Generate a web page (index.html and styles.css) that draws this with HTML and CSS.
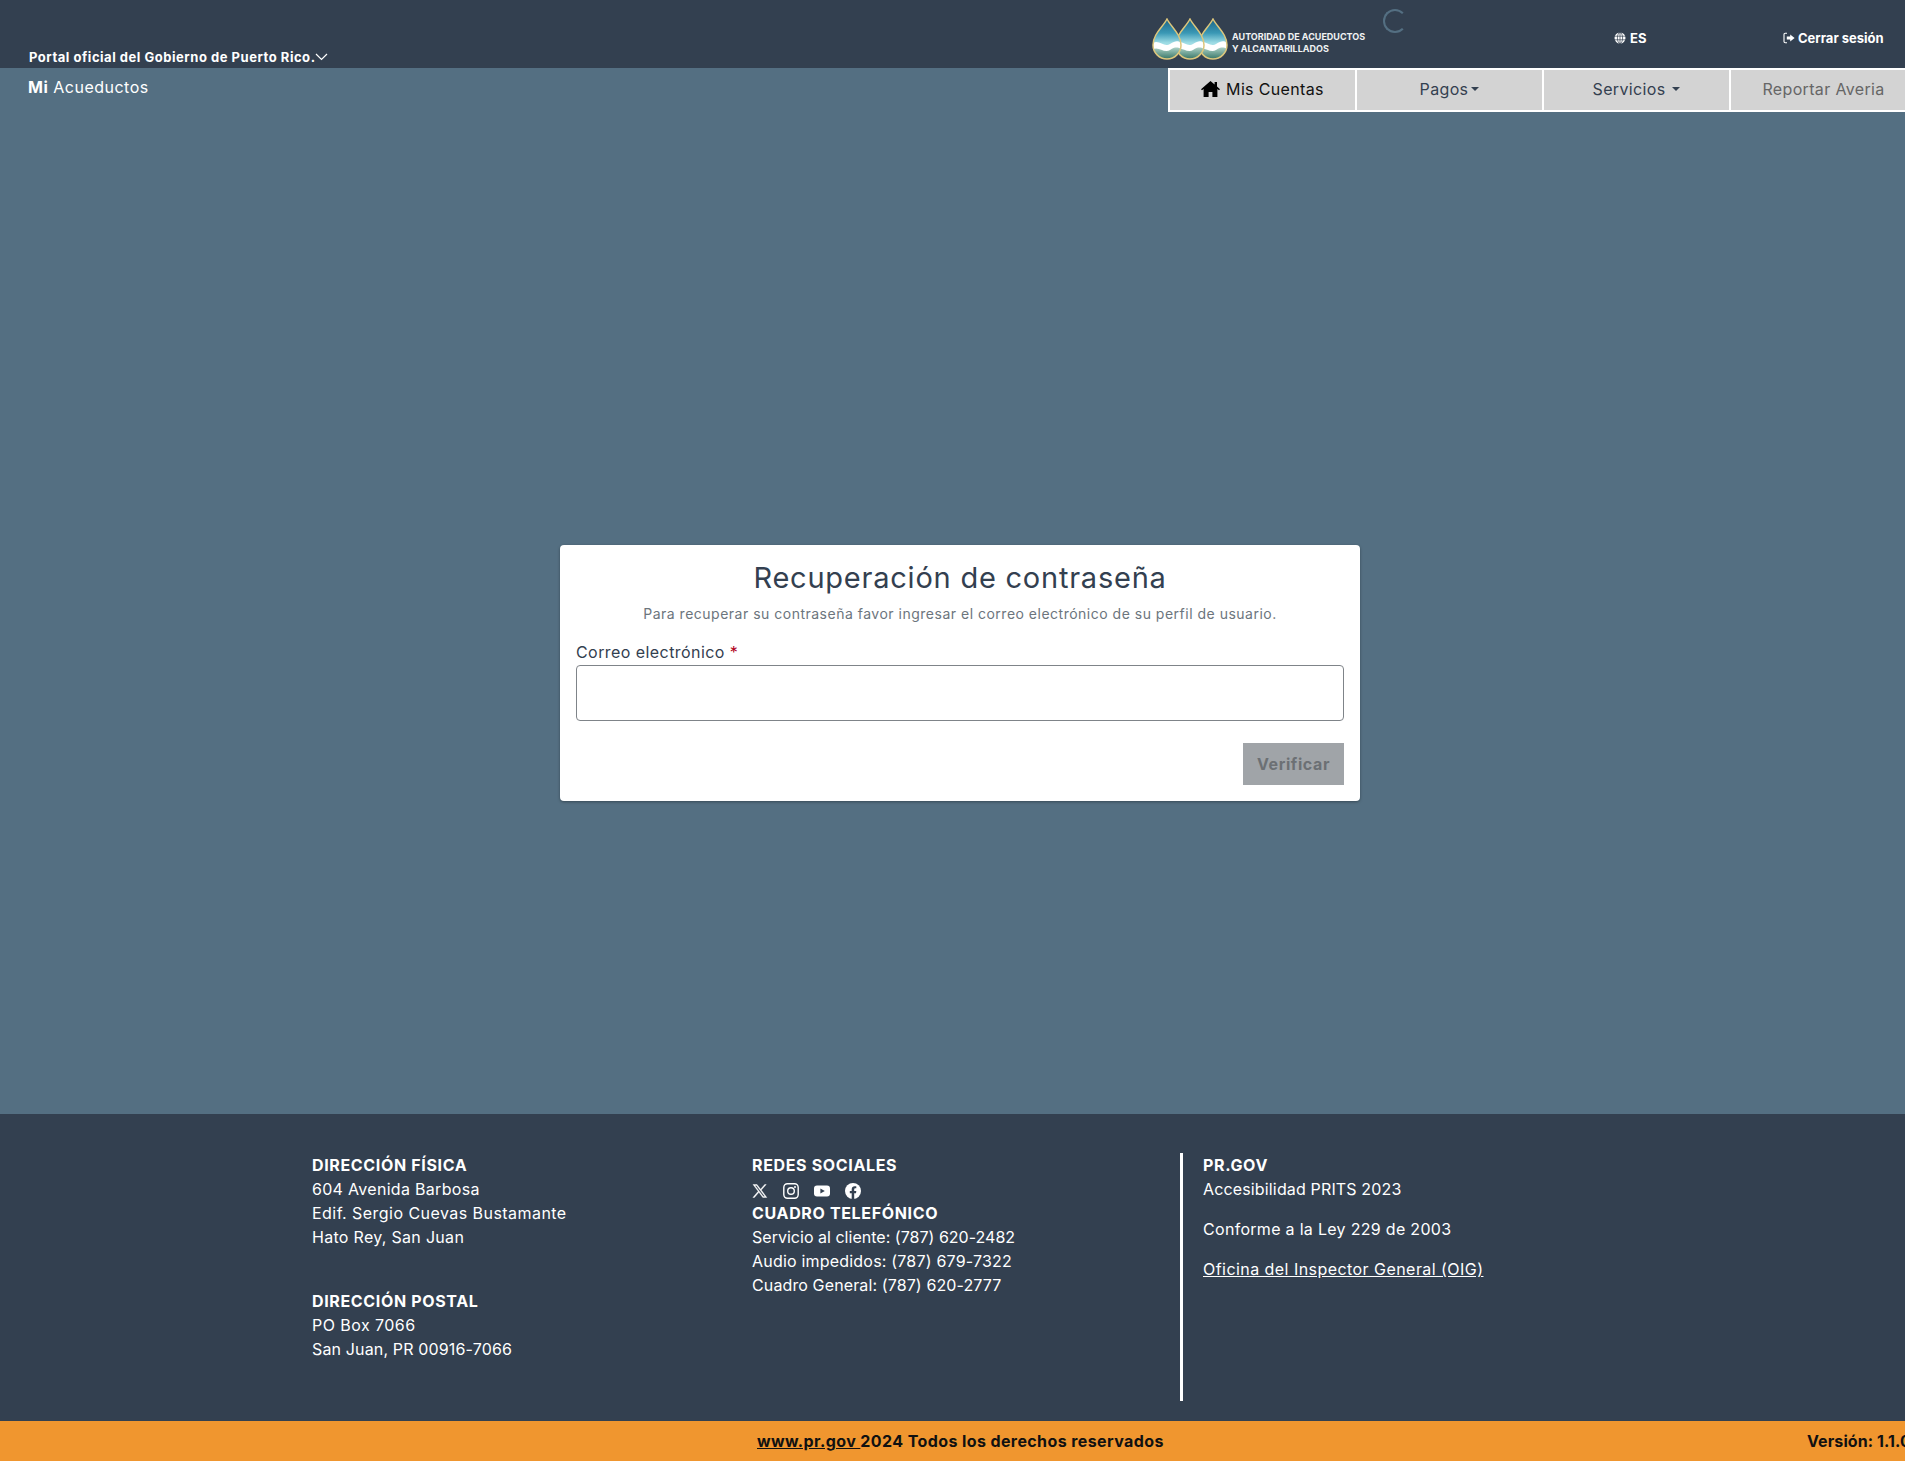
FILE: index.html
```html
<!DOCTYPE html>
<html lang="es">
<head>
<meta charset="utf-8">
<title>Mi Acueductos</title>
<link rel="stylesheet" href="styles.css">
</head>
<body>
<div class="page">

  <!-- top bar -->
  <header class="topbar">
    <div class="portal">
      <span>Portal oficial del Gobierno de Puerto Rico.</span>
      <svg class="chev" width="13" height="8" viewBox="0 0 13 8"><path d="M1 1l5.5 5.5L12 1" fill="none" stroke="#fff" stroke-width="1.2"/></svg>
    </div>
    <div class="logo">
      <svg width="76" height="42" viewBox="0 0 76 42">
        <defs>
          <linearGradient id="dropfill" x1="0" y1="0" x2="0" y2="1">
            <stop offset="0" stop-color="#1b6486"/>
            <stop offset="0.35" stop-color="#3a98b5"/>
            <stop offset="0.6" stop-color="#9fdde5"/>
          </linearGradient>
          <linearGradient id="dropsea" x1="0" y1="0" x2="0" y2="1">
            <stop offset="0" stop-color="#a9cfc4"/>
            <stop offset="1" stop-color="#2f6f60"/>
          </linearGradient>
          <path id="drop" d="M15 1C19 9 29 16 29 27A14 14 0 0 1 1 27C1 16 11 9 15 1Z"/>
          <clipPath id="dropclip"><use href="#drop"/></clipPath>
          <g id="onedrop">
            <use href="#drop" fill="url(#dropfill)"/>
            <g clip-path="url(#dropclip)">
              <path d="M0 26C6 20 12 30 18 26S26 23 30 25V42H0Z" fill="#fff"/>
              <path d="M0 32C6 27 12 36 18 32S26 30 30 31V42H0Z" fill="url(#dropsea)"/>
            </g>
            <use href="#drop" fill="none" stroke="#dcc67c" stroke-width="1.5"/>
          </g>
        </defs>
        <use href="#onedrop" x="46"/>
        <use href="#onedrop" x="23"/>
        <use href="#onedrop" x="0"/>
      </svg>
      <div class="logo-text">AUTORIDAD DE ACUEDUCTOS<br>Y ALCANTARILLADOS</div>
      <div class="spinner"></div>
    </div>
    <div class="lang">
      <svg width="12" height="12" viewBox="0 0 12 12"><circle cx="6" cy="6" r="5.5" fill="#fff"/><path d="M0 4.2h12M0 7.8h12M6 0v12" stroke="#334050" stroke-width=".7"/><ellipse cx="6" cy="6" rx="2.6" ry="5.5" fill="none" stroke="#334050" stroke-width=".7"/></svg>
      <span>ES</span>
    </div>
    <div class="logout">
      <svg width="12" height="12" viewBox="0 0 12 12"><path d="M4 1.2H2.2A1.2 1.2 0 0 0 1 2.4v7.2a1.2 1.2 0 0 0 1.2 1.2H4" fill="none" stroke="#fff" stroke-width="1.1"/><path d="M3.8 4.6h3.4V2.4L11.6 6 7.2 9.6V7.4H3.8Z" fill="#fff"/></svg>
      <span>Cerrar sesión</span>
    </div>
  </header>

  <main class="content">
    <div class="subhead">
      <div class="brand"><b>Mi</b> Acueductos</div>
      <nav class="nav">
        <a class="nav-item active">
          <svg width="19" height="16" viewBox="0 0 19 16"><path d="M9.5 0L0 8.2l1 1.1L2.6 8v8h5v-5h3.8v5h5V8L18 9.3l1-1.1-3-2.6V1h-2.4v2.5Z" fill="#000"/></svg>
          Mis Cuentas
        </a>
        <a class="nav-item">Pagos<i class="caret caret-near"></i></a>
        <a class="nav-item">Servicios<i class="caret"></i></a>
        <a class="nav-item muted">Reportar Averia</a>
      </nav>
    </div>

    <section class="card">
      <h1>Recuperación de contraseña</h1>
      <p class="hint">Para recuperar su contraseña favor ingresar el correo electrónico de su perfil de usuario.</p>
      <label class="field-label" for="email">Correo electrónico <span class="req">*</span></label>
      <input class="field" id="email" type="text">
      <div class="actions"><button class="btn" disabled>Verificar</button></div>
    </section>
  </main>

  <footer class="footer">
    <div class="foot-col">
      <h4>DIRECCIÓN FÍSICA</h4>
      <div>604 Avenida Barbosa</div>
      <div class="wide">Edif. Sergio Cuevas Bustamante</div>
      <div>Hato Rey, San Juan</div>
      <h4 class="gap-top">DIRECCIÓN POSTAL</h4>
      <div class="wide">PO Box 7066</div>
      <div class="tight">San Juan, PR 00916-7066</div>
    </div>
    <div class="foot-col">
      <h4>REDES SOCIALES</h4>
      <div class="social">
        <svg width="16" height="16" viewBox="0 0 16 16"><path d="M1 1.5h4l3.6 4.8 4.1-4.8h1.5L9.3 7.1l5.5 7.4h-4L6.9 9.3l-4.5 5.2H.9l5.3-6.2Zm1.9 1l8.4 11h1.6L4.5 2.5Z" fill="#fff" stroke="#fff" stroke-width=".4"/></svg>
        <svg width="16" height="16" viewBox="0 0 16 16"><rect x=".8" y=".8" width="14.4" height="14.4" rx="3.6" fill="none" stroke="#fff" stroke-width="1.4"/><circle cx="8" cy="8" r="3.3" fill="none" stroke="#fff" stroke-width="1.4"/><circle cx="12" cy="4" r="1" fill="#fff"/></svg>
        <svg width="16" height="16" viewBox="0 0 16 16"><rect y="2.4" width="16" height="11.2" rx="3" fill="#fff"/><path d="M6.4 5.4L10.8 8l-4.4 2.6Z" fill="#334050"/></svg>
        <svg width="16" height="16" viewBox="0 0 16 16"><circle cx="8" cy="8" r="8" fill="#fff"/><path d="M6.7 16V10.3H4.8V8h1.9V6.3c0-2 1.2-3 3-3 .8 0 1.6.1 1.6.1v1.9h-.9c-1 0-1.2.6-1.2 1.2V8h2.1l-.3 2.3H9.2V16Z" fill="#334050"/></svg>
      </div>
      <h4>CUADRO TELEFÓNICO</h4>
      <div class="phone">Servicio al cliente: (787) 620-2482</div>
      <div class="phone-wide">Audio impedidos: (787) 679-7322</div>
      <div class="phone-mid">Cuadro General: (787) 620-2777</div>
    </div>
    <div class="foot-col foot-last">
      <h4>PR.GOV</h4>
      <div class="tight">Accesibilidad PRITS 2023</div>
      <div class="spaced">Conforme a la Ley 229 de 2003</div>
      <div class="spaced wide"><a class="foot-link">Oficina del Inspector General (OIG)</a></div>
    </div>
  </footer>

  <div class="legal">
    <div class="legal-text"><a>www.pr.gov </a>2024 Todos los derechos reservados</div>
    <div class="version">Versión: 1.1.0</div>
  </div>

</div>
</body>
</html>
```

FILE: styles.css
```css
html, body {
  margin: 0;
  padding: 0;
  overflow: hidden;
}

body {
  font-family: Inter, "Noto Sans", sans-serif;
  font-size: 16px;
  color: #fff;
  background-color: #546f82;
}

/* the site lays out at 1920 and runs off the right edge of the window */
.page {
  display: flex;
  flex-direction: column;
  width: 1920px;
  height: 1461px;
  overflow: hidden;
}

/* top bar */
.topbar {
  display: flex;
  height: 68px;
  flex: none;
  background-color: #334050;
  font-weight: 700;
  font-size: 13px;
}

.portal {
  display: flex;
  align-items: center;
  width: 1152px;
  height: 22px;
  margin-top: 46px;
  padding-left: 29px;
  box-sizing: border-box;
  letter-spacing: .53px;
}

.chev {
  margin-left: -1px;
}

.logo {
  position: relative;
  display: flex;
  align-items: flex-start;
  gap: 4px;
  width: 462px;
  padding-top: 18px;
  box-sizing: border-box;
}

.logo-text {
  margin-top: 13px;
  font-size: 9px;
  line-height: 12px;
  font-weight: 700;
  color: #f0f2f3;
}

.spinner {
  position: absolute;
  left: 231px;
  top: 9px;
  width: 24px;
  height: 24px;
  box-sizing: border-box;
  border: 2px solid #546f82;
  border-right-color: transparent;
  border-radius: 50%;
}

.lang {
  display: flex;
  align-items: center;
  gap: 4px;
  width: 169px;
  height: 76px;
}

.logout {
  display: flex;
  align-items: center;
  gap: 3px;
  height: 76px;
}

/* main area */
.content {
  flex: 1;
}

.subhead {
  display: flex;
  justify-content: space-between;
  align-items: flex-start;
}

.brand {
  padding: 8px 0 0 28px;
  font-size: 16px;
  line-height: 22px;
  letter-spacing: .5px;
}

.nav {
  display: flex;
  width: 752px;
  flex: none;
  box-sizing: border-box;
  background-color: #fff;
  padding: 2px 0 2px 2px;
  gap: 2px;
}

.nav-item {
  display: flex;
  align-items: center;
  justify-content: center;
  gap: 6px;
  width: 185px;
  height: 40px;
  padding-bottom: 2px;
  box-sizing: border-box;
  background-color: #d3d3d3;
  color: #334050;
  font-size: 16px;
  letter-spacing: .35px;
}

.nav-item.active {
  color: #111;
}

.nav-item.muted {
  color: #666;
}

.caret {
  width: 0;
  height: 0;
  margin-left: 1px;
  border-top: 4px solid #334050;
  border-left: 4px solid transparent;
  border-right: 4px solid transparent;
}

.caret-near {
  margin-left: -3px;
}

/* recovery card */
.card {
  width: 800px;
  height: 256px;
  margin: 433px auto 0;
  padding: 15px 16px 16px;
  box-sizing: border-box;
  background-color: #fff;
  border-radius: 4px;
  box-shadow: 0 1px 3px rgba(0, 0, 0, .35);
  color: #334050;
}

.card h1 {
  margin: 0;
  font-size: 29px;
  line-height: 36px;
  font-weight: 400;
  text-align: center;
  letter-spacing: .77px;
}

.hint {
  margin: 8px 0 0;
  font-size: 14px;
  line-height: 20px;
  text-align: center;
  color: #6c757d;
  letter-spacing: .5px;
}

.field-label {
  display: block;
  margin-top: 16px;
  margin-bottom: 1px;
  font-size: 16px;
  line-height: 24px;
  letter-spacing: .43px;
}

.req {
  color: #b00020;
}

.field {
  display: block;
  width: 100%;
  height: 56px;
  box-sizing: border-box;
  border: 1px solid #7f8489;
  border-radius: 4px;
  background-color: #fff;
}

.actions {
  display: flex;
  justify-content: flex-end;
  margin-top: 22px;
}

.btn {
  width: 101px;
  height: 42px;
  border: 0;
  background-color: #a0a4a8;
  color: #6c7074;
  font-family: Inter, "Noto Sans", sans-serif;
  font-size: 16px;
  font-weight: 700;
  letter-spacing: .6px;
}

/* footer */
.footer {
  display: grid;
  grid-template-columns: 440px 428px 1fr;
  flex: none;
  height: 307px;
  padding: 39px 0 20px 312px;
  box-sizing: border-box;
  background-color: #334050;
  font-size: 16px;
  line-height: 24px;
  letter-spacing: .3px;
}

.footer h4 {
  margin: 0;
  font-size: 16px;
  line-height: 24px;
  font-weight: 700;
  letter-spacing: .65px;
}

.footer .gap-top {
  margin-top: 40px;
}

.wide {
  letter-spacing: .45px;
}

.tight {
  letter-spacing: .15px;
}

.phone {
  letter-spacing: .02px;
}

.phone-mid {
  letter-spacing: .12px;
}

.phone-wide {
  letter-spacing: .2px;
}

.social {
  display: flex;
  gap: 15px;
  height: 24px;
  padding-top: 3px;
  box-sizing: border-box;
  align-items: center;
}

.foot-last {
  border-left: 3px solid #fff;
  padding-left: 20px;
}

.spaced {
  margin-top: 16px;
}

.foot-link {
  text-decoration: underline;
}

/* bottom strip */
.legal {
  display: grid;
  grid-template-columns: 757px 1050px 113px;
  flex: none;
  height: 40px;
  align-items: center;
  background-color: #f0962f;
  color: #111;
  font-weight: 700;
  font-size: 16px;
  letter-spacing: .4px;
}

.legal-text {
  grid-column: 2;
}

.legal-text a {
  text-decoration: underline;
}

.version {
  grid-column: 3;
  white-space: nowrap;
  letter-spacing: .1px;
}
```
